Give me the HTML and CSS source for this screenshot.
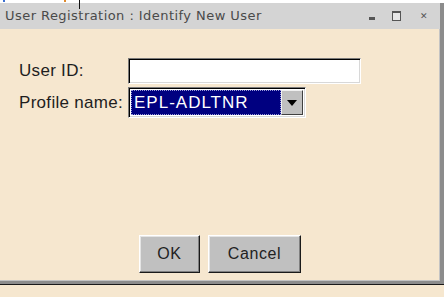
FILE: index.html
```html
<!DOCTYPE html>
<html lang="en">
<head>
  <meta charset="UTF-8">
  <title>User Registration</title>
  <link rel="stylesheet" href="styles.css">
</head>
<body>
  <div class="top-strip">
    <span class="mark mark-blue"></span>
    <span class="mark mark-orange"></span>
    <span class="pin-line"></span>
  </div>
  <div class="window">
    <div class="titlebar">
      <span class="title">User Registration : Identify New User</span>
      <div class="controls">
        <span class="ctl-min"></span>
        <span class="ctl-max"></span>
        <span class="ctl-close">&#x2715;</span>
      </div>
    </div>
    <div class="content">
      <div class="form">
        <label for="userId">User ID:</label>
        <input type="text" id="userId" class="field">
        <label>Profile name:</label>
        <div class="combo">
          <div class="combo-value">EPL-ADLTNR</div>
          <div class="combo-btn">
            <svg width="10" height="6" viewBox="0 0 10 6"><path d="M0 0h10L5 6z" fill="#000"/></svg>
          </div>
        </div>
      </div>
      <div class="buttons">
        <button class="btn btn-ok">OK</button>
        <button class="btn btn-cancel">Cancel</button>
      </div>
    </div>
  </div>
</body>
</html>
```

FILE: styles.css
```css
body {
  margin: 0;
  padding: 0;
  background: #f6e7cf;
  font-family: "Liberation Sans", Arial, sans-serif;
  color: #222;
  width: 444px;
  height: 297px;
  overflow: hidden;
  position: relative;
}
.top-strip {
  height: 3px;
  background: #fff;
  position: relative;
}
.mark {
  position: absolute;
  top: 0;
  width: 2px;
  height: 2px;
}
.mark-blue { left: 3px; background: #3b6fd0; }
.mark-orange { left: 64px; background: #e08a2c; }
.pin-line {
  position: absolute;
  left: 79px;
  top: 0;
  width: 1px;
  height: 9px;
  background: #111;
  z-index: 2;
}
.window {
  width: 440px;
  height: 278px;
  border-right: 4px solid #8c8c8c;
  border-bottom: 3px solid #8c8c8c;
  box-shadow: 0 1px 0 #1a1a1a;
  display: flex;
  flex-direction: column;
}
.titlebar {
  height: 26px;
  background: #d4d4d4;
  display: flex;
  align-items: center;
  justify-content: space-between;
  padding: 0 0 0 5px;
  font-family: "DejaVu Sans", sans-serif;
  font-size: 13px;
  letter-spacing: 0.45px;
  color: #4a4a4a;
}
.title { padding-bottom: 1px; }
.controls {
  display: flex;
  align-items: center;
  gap: 15px;
  padding-right: 12px;
}
.ctl-min {
  width: 6px;
  height: 3px;
  background: #555;
  margin-top: 4px;
  margin-right: 2px;
}
.ctl-max {
  width: 7px;
  height: 7px;
  border: 1px solid #555;
  border-top-width: 2px;
  background: #e6e6e6;
}
.ctl-close {
  font-size: 9px;
  color: #555;
  font-weight: bold;
  margin-left: 4px;
}
.content {
  flex: 1;
  display: flex;
  flex-direction: column;
  justify-content: space-between;
  padding: 29px 0 8px 19px;
  box-shadow: inset -1px -1px 0 #c4c4c4;
}
.form {
  display: grid;
  grid-template-columns: 109px auto;
  row-gap: 3px;
  align-items: center;
  justify-items: start;
}
.form label {
  font-size: 17px;
  letter-spacing: 0.3px;
  color: #1e1e1e;
}
.field {
  box-sizing: border-box;
  width: 233px;
  height: 26px;
  margin: 0;
  background: #fff;
  border: 1px solid;
  border-color: #7a7a7a #fff #fff #7a7a7a;
  box-shadow: inset 1px 1px 0 #000, inset -1px -1px 0 #d8d8d8;
  outline: none;
}
.combo {
  box-sizing: border-box;
  width: 178px;
  height: 31px;
  display: flex;
  padding: 2px;
  border: 1px solid;
  border-color: #7a7a7a #fff #fff #7a7a7a;
  box-shadow: inset 1px 1px 0 #000, inset -1px -1px 0 #d8d8d8;
  background: #fff;
}
.combo-value {
  flex: 1;
  background: #000080;
  color: #fff;
  font-size: 17px;
  letter-spacing: 1px;
  line-height: 23px;
  padding-left: 2px;
  border: 1px dotted #9a9ad8;
}
.combo-btn {
  box-sizing: border-box;
  width: 22px;
  background: #c0c0c0;
  border: 1px solid;
  border-color: #f0f0f0 #404040 #404040 #f0f0f0;
  display: flex;
  align-items: center;
  justify-content: center;
}
.buttons {
  display: flex;
  justify-content: center;
  gap: 8px;
  margin-left: -19px;
}
.btn {
  box-sizing: border-box;
  height: 38px;
  background: #c0c0c0;
  border: 1px solid;
  border-color: #fff #1a1a1a #1a1a1a #fff;
  box-shadow: inset -1px -1px 0 #808080, inset 1px 1px 0 #e4e4e4;
  font-family: "Liberation Sans", Arial, sans-serif;
  font-size: 16px;
  letter-spacing: 0.6px;
  color: #222;
  padding: 0;
}
.btn-ok { width: 61px; }
.btn-cancel { width: 93px; }
```
